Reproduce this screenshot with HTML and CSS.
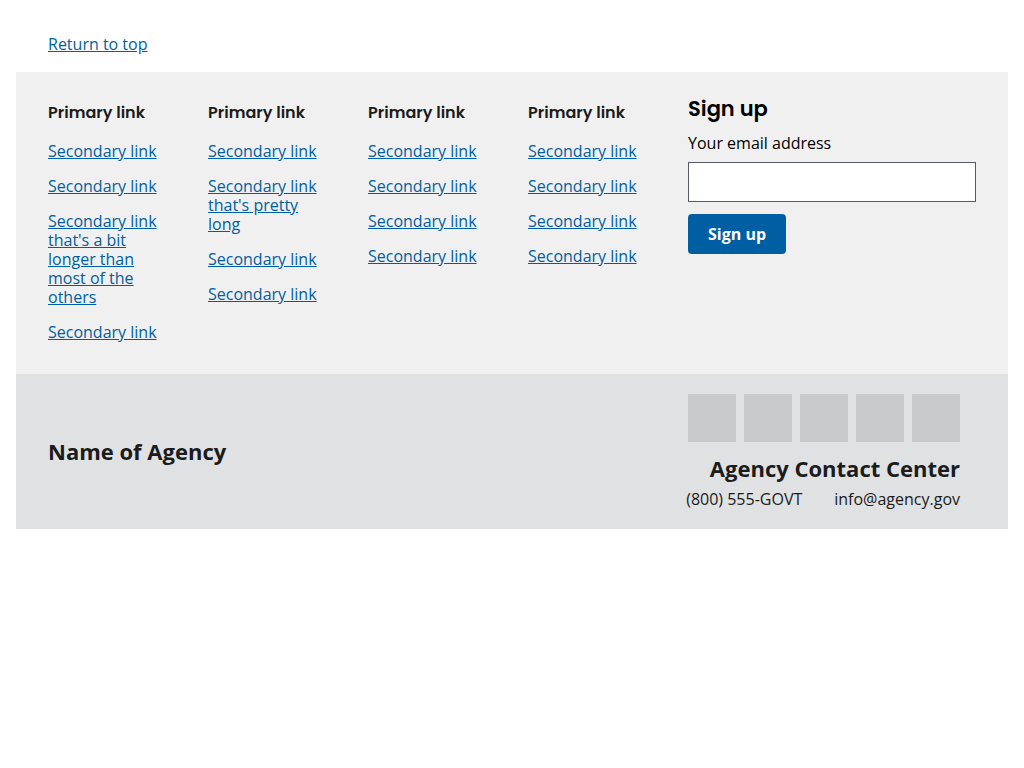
FILE: index.html
```html
<!DOCTYPE html>
<html lang="en">
<head>
<meta charset="utf-8">
<meta name="viewport" content="width=device-width, initial-scale=1">
<title>Footer</title>
<link rel="stylesheet" href="styles.css">
</head>
<body>
<footer class="footer">
  <div class="return"><a class="link" href="#">Return to top</a></div>
  <div class="primary">
    <nav class="nav" aria-label="Footer navigation">
      <section class="column">
        <h4 class="column-title">Primary link</h4>
        <ul class="list">
          <li><a class="link" href="#">Secondary link</a></li>
          <li><a class="link" href="#">Secondary link</a></li>
          <li><a class="link" href="#">Secondary link that's a bit longer than most of the others</a></li>
          <li><a class="link" href="#">Secondary link</a></li>
        </ul>
      </section>
      <section class="column">
        <h4 class="column-title">Primary link</h4>
        <ul class="list">
          <li><a class="link" href="#">Secondary link</a></li>
          <li><a class="link" href="#">Secondary link that's pretty long</a></li>
          <li><a class="link" href="#">Secondary link</a></li>
          <li><a class="link" href="#">Secondary link</a></li>
        </ul>
      </section>
      <section class="column">
        <h4 class="column-title">Primary link</h4>
        <ul class="list">
          <li><a class="link" href="#">Secondary link</a></li>
          <li><a class="link" href="#">Secondary link</a></li>
          <li><a class="link" href="#">Secondary link</a></li>
          <li><a class="link" href="#">Secondary link</a></li>
        </ul>
      </section>
      <section class="column">
        <h4 class="column-title">Primary link</h4>
        <ul class="list">
          <li><a class="link" href="#">Secondary link</a></li>
          <li><a class="link" href="#">Secondary link</a></li>
          <li><a class="link" href="#">Secondary link</a></li>
          <li><a class="link" href="#">Secondary link</a></li>
        </ul>
      </section>
    </nav>
    <form class="signup">
      <h3 class="signup-title">Sign up</h3>
      <label class="label" for="email">Your email address</label>
      <input class="input" id="email" name="email" type="email">
      <button class="button" type="submit">Sign up</button>
    </form>
  </div>
  <div class="secondary">
    <p class="heading">Name of Agency</p>
    <div class="contact">
      <div class="social">
        <a class="social-link" href="#" aria-label="Facebook"></a>
        <a class="social-link" href="#" aria-label="Twitter"></a>
        <a class="social-link" href="#" aria-label="YouTube"></a>
        <a class="social-link" href="#" aria-label="Instagram"></a>
        <a class="social-link" href="#" aria-label="RSS"></a>
      </div>
      <p class="heading">Agency Contact Center</p>
      <address class="address">
        <a class="plain" href="tel:8005554688">(800) 555-GOVT</a>
        <a class="plain" href="mailto:info@agency.gov">info@agency.gov</a>
      </address>
    </div>
  </div>
</footer>
</body>
</html>
```

FILE: styles.css
```css
* { box-sizing: border-box; }

body {
  margin: 0;
  padding: 16px;
  background: #fff;
  color: #1b1b1b;
  font: 16px/19px "Open Sans", sans-serif;
}

h3, h4, p, ul { margin: 0; padding: 0; }

.link { color: #005ea2; text-decoration: underline; }

.return { padding: 19px 32px 18px; }

.primary {
  display: grid;
  grid-template-columns: minmax(0, 2fr) minmax(0, 1fr);
  background: #f0f0f0;
  padding: 0 16px;
}

.nav {
  display: grid;
  grid-template-columns: repeat(4, minmax(0, 1fr));
  padding: 32px 0;
}

.column { padding: 0 24px 0 16px; }

.column-title {
  font: 600 16px/18px Poppins, "Open Sans", sans-serif;
  margin-bottom: 20px;
}

.list { list-style: none; display: grid; gap: 16px; }

.signup { padding: 24px 16px; }

.signup-title {
  color: #000;
  font: 600 21px/25px Poppins, "Open Sans", sans-serif;
}

.label {
  display: block;
  margin-top: 13px;
  color: #000;
}

.input {
  display: block;
  width: 100%;
  height: 40px;
  margin-top: 9px;
  padding: 8px;
  border: 1px solid #565c65;
  border-radius: 0;
  background: #fff;
  font: inherit;
}

.button {
  margin-top: 12px;
  height: 40px;
  padding: 0 20px;
  border: 0;
  border-radius: 4px;
  background: #005ea2;
  color: #fff;
  font: 700 16px/16px "Open Sans", sans-serif;
}

.secondary {
  display: flex;
  align-items: center;
  justify-content: space-between;
  background: #dfe1e2;
  padding: 20px 48px 20px 32px;
}

.heading { font-weight: 700; font-size: 22px; line-height: 25px; }

.contact {
  display: flex;
  flex-direction: column;
  align-items: flex-end;
}

.social { display: flex; gap: 8px; margin-bottom: 14px; }

.social-link { width: 48px; height: 48px; background: #c9cacb; }

.address { display: flex; gap: 32px; margin-top: 9px; font-style: normal; }

.plain { color: inherit; text-decoration: none; }
```
